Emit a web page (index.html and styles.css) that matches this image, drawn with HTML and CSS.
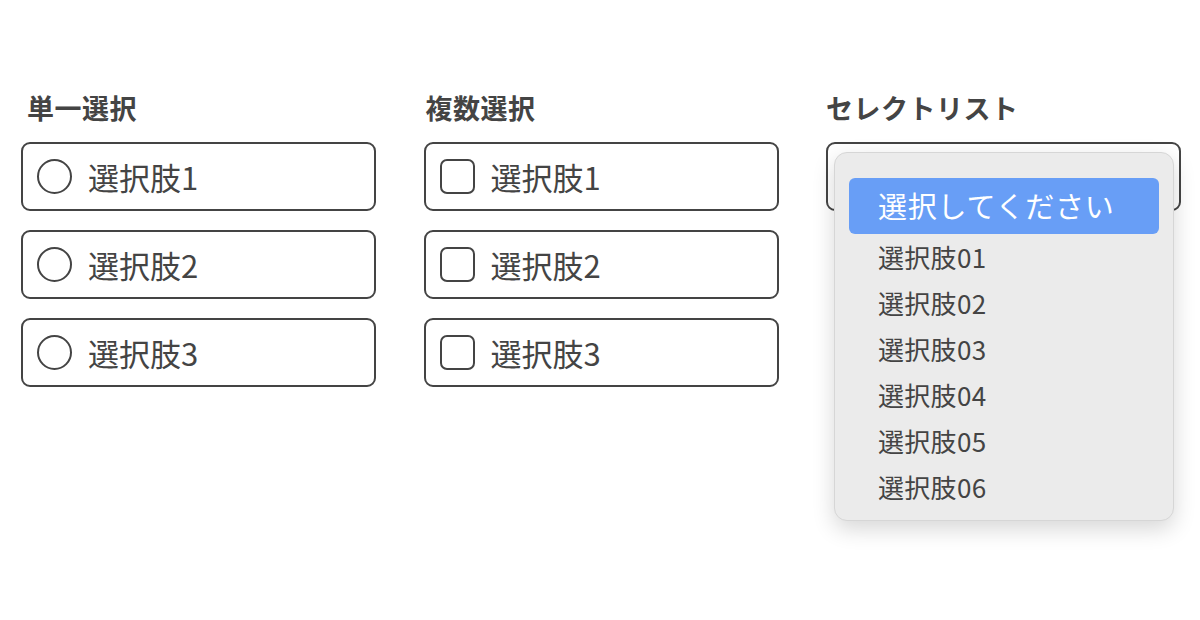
FILE: index.html
```html
<!DOCTYPE html>
<html lang="ja">
<head>
<meta charset="utf-8">
<title>選択</title>
<link rel="stylesheet" href="styles.css">
</head>
<body>
<main class="page">
  <section class="group">
    <h2 class="group-title">単一選択</h2>
    <div class="choices">
      <label class="choice"><span class="radio"></span><span class="choice-text">選択肢1</span></label>
      <label class="choice"><span class="radio"></span><span class="choice-text">選択肢2</span></label>
      <label class="choice"><span class="radio"></span><span class="choice-text">選択肢3</span></label>
    </div>
  </section>
  <section class="group">
    <h2 class="group-title group-title--multi">複数選択</h2>
    <div class="choices">
      <label class="choice"><span class="check"></span><span class="choice-text">選択肢1</span></label>
      <label class="choice"><span class="check"></span><span class="choice-text">選択肢2</span></label>
      <label class="choice"><span class="check"></span><span class="choice-text">選択肢3</span></label>
    </div>
  </section>
  <section class="group">
    <h2 class="group-title group-title--select">セレクトリスト</h2>
    <div class="select-wrap">
      <div class="select-box"></div>
      <ul class="popup">
        <li class="popup-item selected">選択してください</li>
        <li class="popup-item">選択肢01</li>
        <li class="popup-item">選択肢02</li>
        <li class="popup-item">選択肢03</li>
        <li class="popup-item">選択肢04</li>
        <li class="popup-item">選択肢05</li>
        <li class="popup-item">選択肢06</li>
      </ul>
    </div>
  </section>
</main>
</body>
</html>
```
FILE: styles.css
```css
html, body {
  margin: 0;
  padding: 0;
  background: #ffffff;
}
html {
  height: 100%;
}
body {
  min-height: 620px;
  font-family: "Noto Sans CJK JP", "Noto Sans", sans-serif;
  color: #444444;
}
.page {
  display: grid;
  grid-template-columns: 355px 355px 355px;
  justify-content: space-between;
  padding: 90px 19px 150px 21px;
}
.group-title {
  margin: 0 0 16px 6px;
  font-size: 27px;
  font-weight: 700;
  letter-spacing: 0.5px;
  line-height: 36px;
  height: 36px;
  color: #444444;
}
.group-title--multi {
  margin-left: 2px;
}
.group-title--select {
  margin-left: 0;
}
.choices {
  display: flex;
  flex-direction: column;
  gap: 19px;
}
.choice {
  display: flex;
  align-items: center;
  gap: 16px;
  height: 69px;
  box-sizing: border-box;
  border: 2px solid #444444;
  border-radius: 9px;
  padding-left: 14px;
}
.radio {
  width: 35px;
  height: 35px;
  box-sizing: border-box;
  border: 2px solid #444444;
  border-radius: 50%;
}
.check {
  width: 35px;
  height: 35px;
  box-sizing: border-box;
  border: 2px solid #444444;
  border-radius: 7px;
}
.choice-text {
  font-size: 31px;
  line-height: 1;
  color: #444444;
}
.select-wrap {
  position: relative;
}
.select-box {
  height: 69px;
  box-sizing: border-box;
  border: 2px solid #444444;
  border-radius: 9px;
}
.popup {
  position: absolute;
  top: 10px;
  left: 8px;
  width: 340px;
  box-sizing: border-box;
  margin: 0;
  padding: 25px 14px 9px;
  list-style: none;
  background: #ebebeb;
  border: 1px solid #d6d6d6;
  border-radius: 13px;
  box-shadow: 0 8px 22px rgba(0, 0, 0, 0.16);
}
.popup-item {
  height: 46px;
  display: flex;
  align-items: center;
  padding-left: 29px;
  padding-bottom: 4px;
  box-sizing: border-box;
  font-size: 26px;
  letter-spacing: 0.3px;
  color: #444444;
}
.popup-item.selected {
  height: 56px;
  padding-bottom: 2px;
  margin-bottom: 1px;
  background: #689ef6;
  border-radius: 6px;
  color: #ffffff;
  font-size: 29px;
  letter-spacing: 0.8px;
}
```
